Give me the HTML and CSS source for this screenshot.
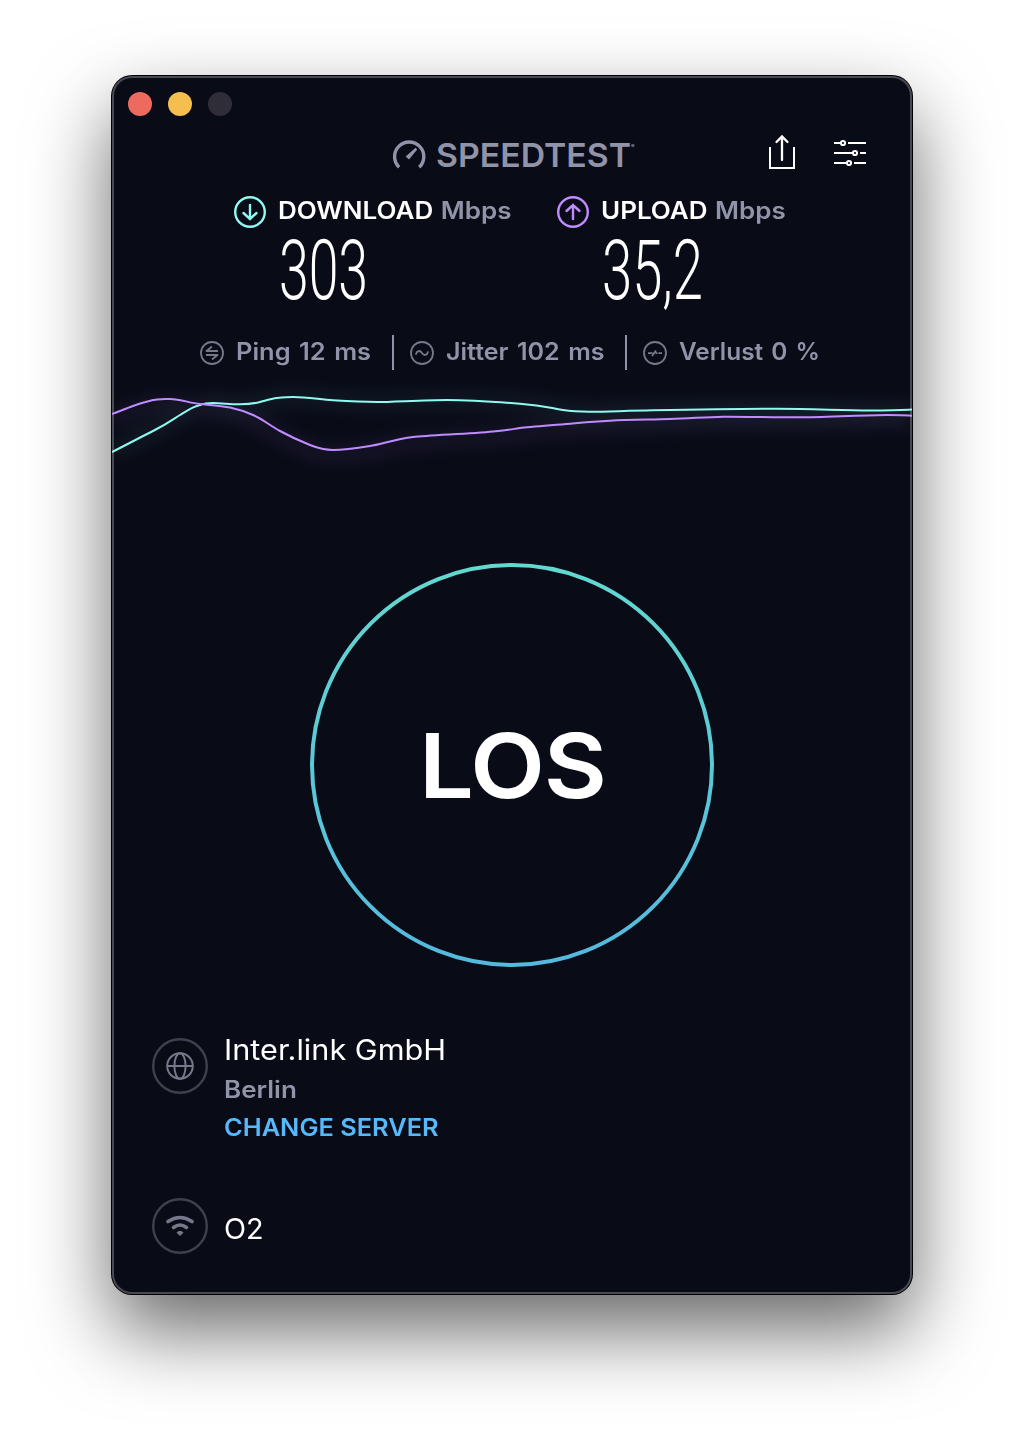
FILE: index.html
```html
<!DOCTYPE html>
<html lang="de">
<head>
    <meta charset="UTF-8">
    <meta name="viewport" content="width=device-width, initial-scale=1.0">
    <title>Speedtest</title>
    <link rel="stylesheet" href="styles.css">
</head>
<body>
    <main class="window">
        <div class="titlebar">
            <span class="light close"></span>
            <span class="light minimize"></span>
            <span class="light zoom"></span>
        </div>

        <header class="header">
            <svg class="logo" width="244" height="40" viewBox="0 0 244 40">
                <path d="M7.1 29.2A14.6 14.6 0 1 1 27.3 29.2" fill="none" stroke="#9193a8" stroke-width="3.4"/>
                <path d="M13.6 18.4L23.6 9.8L25.2 11.4L17 21.6Z" fill="#9193a8"/>
                <text class="logo-text" x="44" y="29" textLength="195" lengthAdjust="spacingAndGlyphs">SPEEDTEST</text>
                <circle cx="240.8" cy="7.5" r="1.8" fill="#5c5d6e"/>
            </svg>
            <div class="actions">
                <svg width="28" height="36" viewBox="0 0 28 36" fill="none" stroke="#fff" stroke-width="2">
                    <path d="M2 13V34H26V13"/>
                    <path d="M14 26V3M8.5 8L14 2.5L19.5 8" stroke-linecap="round" stroke-width="2.3"/>
                </svg>
                <svg width="32" height="28" viewBox="0 0 32 28" fill="none" stroke="#fff" stroke-width="2">
                    <path d="M0 5H6M14 5H32M0 15H18M26 15H32M0 25H12M20 25H32"/>
                    <circle cx="9" cy="5" r="2.1"/>
                    <circle cx="21" cy="15" r="2.1"/>
                    <circle cx="15" cy="25" r="2.1"/>
                </svg>
            </div>
        </header>

        <section class="results">
            <div class="result">
                <svg width="32" height="32" viewBox="0 0 32 32" fill="none" stroke="#8ffaf0" stroke-width="2.4">
                    <circle cx="16" cy="16" r="14.8"/>
                    <path d="M16 9V23M9.5 17L16 23L22.5 17" stroke-linecap="round"/>
                </svg>
                <div>
                    <h2 class="label">DOWNLOAD <span class="unit">Mbps</span></h2>
                    <svg class="value" width="120" height="78" viewBox="0 0 120 78">
                        <text class="digits" x="1" y="65" textLength="89" lengthAdjust="spacingAndGlyphs">303</text>
                    </svg>
                </div>
            </div>
            <div class="result">
                <svg width="32" height="32" viewBox="0 0 32 32" fill="none" stroke="#bf8cff" stroke-width="2.4">
                    <circle cx="16" cy="16" r="14.8"/>
                    <path d="M16 23V9M9.5 15L16 9L22.5 15" stroke-linecap="round"/>
                </svg>
                <div>
                    <h2 class="label">UPLOAD <span class="unit">Mbps</span></h2>
                    <svg class="value" width="120" height="78" viewBox="0 0 120 78">
                        <text class="digits" x="1" y="65" textLength="101" lengthAdjust="spacingAndGlyphs">35,2</text>
                    </svg>
                </div>
            </div>
        </section>

        <section class="stats">
            <div class="stat ping">
                <svg width="24" height="24" viewBox="0 0 24 24" fill="none" stroke="#77788a" stroke-width="1.8">
                    <circle cx="12" cy="12" r="11"/>
                    <path d="M18 10H6.5L12 5.5M6 14H17.5L12 18.5" stroke-linejoin="round"/>
                </svg>
                <span>Ping 12 ms</span>
            </div>
            <div class="stat jitter">
                <svg width="24" height="24" viewBox="0 0 24 24" fill="none" stroke="#77788a" stroke-width="1.8">
                    <circle cx="12" cy="12" r="11"/>
                    <path d="M6 13C7 9.5 10 9 12 12S17 14.5 18 11" stroke-linecap="round"/>
                </svg>
                <span>Jitter 102 ms</span>
            </div>
            <div class="stat loss">
                <svg width="24" height="24" viewBox="0 0 24 24" fill="none" stroke="#77788a" stroke-width="1.8">
                    <circle cx="12" cy="12" r="11"/>
                    <path d="M5 12.2H9.5M9 15L13 9.5M12.5 12.2H14.5M15.5 12.2H19"/>
                </svg>
                <span>Verlust 0 %</span>
            </div>
        </section>

        <svg class="chart" width="800" height="110" viewBox="0 0 800 110" fill="none" stroke-width="2">
            <defs>
                <filter id="glow" x="-5%" y="-60%" width="110%" height="240%">
                    <feGaussianBlur stdDeviation="9"/>
                </filter>
                <path id="down" d="M0 72C14 65 27 58 41 51S60 40 68 35S82 26 88 25C93 23 97 23 101 23C110 23 119 24.5 128 24.3S142 23.6 148 22S160 18.5 165 18S175 17 181 17C195 17 208 19.5 221 20.3S250 22 265 22S312 20 335 20S384 21.8 408 23.7S438 28 451 30S471 31.7 481 31.7S515 30.8 541 30.3S630 28.7 665 28.7S730 30.5 758 30.5S790 30.1 800 29.6"/>
                <path id="up" d="M0 34C7 31.5 14 28.5 21 26S37 20.5 45 19.5S54 19 58 19C68 19 78 23 88 24S110 25.8 118 27.5S132 31 141 35S158 45.5 168 51S188 61 198 65S213 70 221 70S247 67.8 258 66S284 59 301 57S357 54 381 51.5S399 49.2 408 48S435 45.6 458 43.7S480 41.5 498 40.7S538 39.6 558 39S594 37 611 36.7S664 37.5 691 37.3S755 35 775 35S792 35 800 35.8"/>
            </defs>
            <g filter="url(#glow)" stroke-width="12" opacity=".1">
                <use href="#down" stroke="#8ffaf0" opacity=".8"/>
                <use href="#up" y="5" stroke="#bf8cff"/>
            </g>
            <use href="#down" stroke="#8ffaf0"/>
            <use href="#up" stroke="#bf8cff"/>
        </svg>

        <section class="start">
            <button class="go" type="button">
                <svg class="ring" width="404" height="404" viewBox="0 0 404 404">
                    <defs>
                        <linearGradient id="ringColor" x1="0" y1="0" x2="0" y2="1">
                            <stop offset="0" stop-color="#63d8cf"/>
                            <stop offset="1" stop-color="#53b9de"/>
                        </linearGradient>
                    </defs>
                    <circle cx="202" cy="202" r="200" fill="none" stroke="url(#ringColor)" stroke-width="4"/>
                </svg>
                <span class="go-text">LOS</span>
            </button>
        </section>

        <footer class="connection">
            <div class="row server">
                <svg width="56" height="56" viewBox="0 0 56 56" fill="none" stroke="#3f404e" stroke-width="2.4">
                    <circle cx="28" cy="28" r="26.8"/>
                    <g stroke="#77788a" stroke-width="2">
                        <circle cx="28" cy="28" r="12.8"/>
                        <ellipse cx="28" cy="28" rx="5.6" ry="12.8"/>
                        <path d="M15 28H41"/>
                    </g>
                </svg>
                <div>
                    <div class="host">Inter.link GmbH</div>
                    <div class="city">Berlin</div>
                    <a class="change">CHANGE SERVER</a>
                </div>
            </div>
            <div class="row isp">
                <svg width="56" height="56" viewBox="0 0 56 56" fill="none" stroke="#3f404e" stroke-width="2.4">
                    <circle cx="28" cy="28" r="26.8"/>
                    <g stroke="#77788a" stroke-width="3.6" stroke-linecap="round">
                        <path d="M16 23.5Q28 15.5 40 23.5"/>
                        <path d="M21.5 29.5Q28 24.5 34.5 29.5"/>
                    </g>
                    <path d="M25 34.5Q28 32 31 34.5L28 37.5Z" fill="#77788a" stroke="#77788a" stroke-width="1"/>
                </svg>
                <div class="provider">O2</div>
            </div>
        </footer>
    </main>
</body>
</html>
```
FILE: styles.css
```css
body {
    box-sizing: border-box;
    margin: 0;
    padding: 76px 112px 0;
    height: 1442px;
    background-color: #fff;
    font-family: Inter, sans-serif;
    color: #fff;
}
.window {
    display: flex;
    flex-direction: column;
    height: 1218px;
    border-radius: 20px;
    background-color: #090b17;
    box-shadow: inset 0 0 0 2px #484951, 0 0 0 1px #000, 0 36px 80px rgba(0, 0, 0, 0.6);
}
.titlebar {
    display: flex;
    gap: 16px;
    padding: 16px 16px 0;
    height: 28px;
}
.light {
    width: 24px;
    height: 24px;
    border-radius: 50%;
}
.close {
    background-color: #ed6a5e;
}
.minimize {
    background-color: #f5bf4f;
}
.zoom {
    background-color: #2e2d38;
}
.header {
    display: grid;
    grid-template-columns: 1fr 244px 1fr;
    height: 76px;
    align-items: start;
}
.logo {
    grid-column: 2;
    margin: 18px 0 0 2px;
    overflow: visible;
}
.logo-text {
    font-size: 33px;
    font-weight: 600;
    fill: #9193a8;
}
.actions {
    display: flex;
    justify-content: flex-end;
    align-items: center;
    gap: 38px;
    padding: 14px 46px 0 0;
}
.results {
    display: flex;
    padding-left: 122px;
    height: 139px;
}
.result {
    display: flex;
    gap: 12px;
    width: 323px;
}
.result > svg {
    flex: none;
}
/* the small texts are set a little wider than the font */
.label,
.stat span,
.host,
.city,
.change,
.provider {
    display: block;
    width: max-content;
    transform-origin: left;
    white-space: nowrap;
}
.label {
    margin: 0;
    font-size: 24px;
    line-height: 30px;
    font-weight: 600;
    word-spacing: 1px;
    transform: scaleX(1.083);
}
.unit {
    color: #9193a8;
}
.value {
    display: block;
    margin-top: 8px;
    overflow: visible;
}
.digits {
    font-family: Roboto, sans-serif;
    font-size: 84px;
    font-weight: 300;
    fill: #fff;
}
.stats {
    display: flex;
    height: 35px;
    padding-left: 88px;
    color: #9193a8;
    font-size: 24px;
    line-height: 34px;
    font-weight: 600;
    word-spacing: 2px;
}
.stat {
    display: flex;
    gap: 12px;
    box-sizing: border-box;
}
.stat svg {
    flex: none;
    margin-top: 6px;
}
.ping {
    width: 194px;
    border-right: 2px solid #9193a8;
}
.ping span {
    transform: scaleX(1.06);
}
.jitter {
    width: 233px;
    padding-left: 16px;
    border-right: 2px solid #9193a8;
}
.jitter span {
    transform: scaleX(1.045);
}
.loss {
    padding-left: 16px;
}
.loss span {
    transform: scaleX(1.016);
}
.chart {
    display: block;
    margin-top: 10px;
}
.start {
    display: flex;
    justify-content: center;
    margin-top: 73px;
}
.go {
    display: grid;
    place-items: center;
    padding: 0;
    border: none;
    background: none;
    color: #fff;
    font-family: Inter, sans-serif;
    cursor: pointer;
}
.ring,
.go-text {
    grid-area: 1 / 1;
}
.go-text {
    margin: 2px 0 0 2px;
    font-size: 90px;
    line-height: 100px;
    font-weight: 600;
    letter-spacing: -1px;
    transform: scaleX(1.08);
}
.connection {
    padding: 65px 0 0 40px;
}
.row {
    display: flex;
    gap: 16px;
}
.row svg {
    flex: none;
}
.server svg {
    margin-top: 6px;
}
.server {
    height: 166px;
}
.host,
.provider {
    font-size: 28px;
    line-height: 36px;
    font-weight: 400;
}
.host {
    transform: scaleX(1.095);
}
.city,
.change {
    font-size: 24px;
    line-height: 38px;
    font-weight: 600;
}
.city {
    margin-top: 3px;
    color: #9193a8;
    transform: scaleX(1.085);
}
.change {
    color: #55b9fc;
    transform: scaleX(1.058);
}
.provider {
    margin-top: 13px;
    transform: scaleX(1.03);
}
```
